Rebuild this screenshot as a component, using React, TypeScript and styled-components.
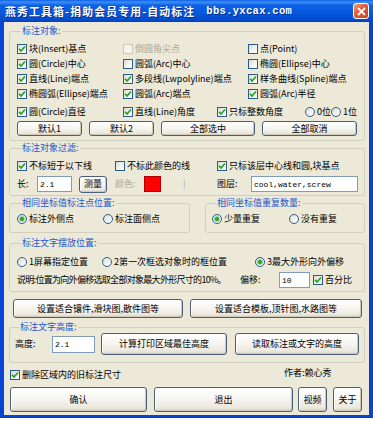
import React from 'react';
import styled, { createGlobalStyle } from 'styled-components';

const GlobalStyle = createGlobalStyle`
  html, body { margin: 0; padding: 0; background: #fff; }
  body {
    font-family: "Noto Sans CJK SC", "Noto Sans", sans-serif;
    font-size: 9px;
    line-height: 12px;
    color: #000;
  }
  * { box-sizing: border-box; }
`;

const Window = styled.div`
  width: 373px;
  display: flex;
  flex-direction: column;
`;

const TitleBar = styled.div`
  height: 22px;
  display: flex;
  align-items: center;
  padding: 0 4px 0 5px;
  background: linear-gradient(#0b5fe8 0%, #3e8ef6 9%, #0d60e6 25%, #0557dc 60%, #034bcc 90%, #0340b4 100%);
  color: #fff;
  font-weight: bold;
  font-size: 10.8px;
  text-shadow: 1px 1px 0 #0a2a8a;
  white-space: nowrap;
`;

const TitleText = styled.span`
  letter-spacing: 1.2px;
`;

const TitleUrl = styled.span`
  font-family: "Liberation Mono", monospace;
  font-size: 10.5px;
  letter-spacing: 0.3px;
  margin-left: 11px;
`;

const CloseBtn = styled.div`
  margin-left: auto;
  width: 16px;
  height: 16px;
  border: 1px solid #fff;
  border-radius: 3px;
  background: linear-gradient(135deg, #f0a08a 0%, #e0613c 40%, #c9401c 100%);
  display: flex;
  align-items: center;
  justify-content: center;
`;

const Body = styled.div`
  background: #ece9d8;
  border: solid #0843d4;
  border-width: 0 4px 3px 4px;
  padding: 3px 4px 3px 5px;
  display: flex;
  flex-direction: column;
`;

const Group = styled.fieldset<{ $pl?: number; $pt?: number; $pb?: number; $mt?: number }>`
  margin: ${p => p.$mt ?? 0}px 0 0 0;
  padding: ${p => p.$pt ?? 4}px 4px ${p => p.$pb ?? 4}px ${p => p.$pl ?? 7}px;
  border: 1px solid #d0d0bf;
  border-radius: 3px;
  min-width: 0;
`;

const Legend = styled.legend`
  margin-left: 4px;
  padding: 0 1px;
  color: #2456d0;
  line-height: 12px;
`;

const Row = styled.div<{ $cols: string; $h: number; $mt?: number }>`
  display: grid;
  grid-template-columns: ${p => p.$cols};
  height: ${p => p.$h}px;
  margin-top: ${p => p.$mt ?? 0}px;
  align-items: center;
  white-space: nowrap;
`;

const ButtonRow = styled.div<{ $gap: number; $mt: number; $pl?: number }>`
  display: flex;
  gap: ${p => p.$gap}px;
  margin-top: ${p => p.$mt}px;
  padding-left: ${p => p.$pl ?? 0}px;
`;

const SplitRow = styled.div`
  display: grid;
  grid-template-columns: 181px 160px;
  gap: 15px;
  margin-top: 1px;
`;

const Btn = styled.button<{ $w: number; $h: number }>`
  width: ${p => p.$w}px;
  height: ${p => p.$h}px;
  padding: 0;
  font: inherit;
  color: #000;
  border: 1px solid #4d5e7a;
  border-radius: 3px;
  background: linear-gradient(#ffffff 0%, #f7f6f2 45%, #ebe8de 85%, #d8d2c2 100%);
  box-shadow: inset -1px -1px 0 #cfc9ba, inset 1px 1px 0 #fff;
  white-space: nowrap;
`;

const TextInput = styled.input<{ $w: number; $h: number }>`
  width: ${p => p.$w}px;
  height: ${p => p.$h}px;
  border: 1px solid #7f9db9;
  background: #fff;
  padding: 0 2px;
  font-family: "Liberation Mono", monospace;
  font-size: 8px;
  color: #000;
  outline: none;
`;

const CheckLabel = styled.span<{ $disabled?: boolean }>`
  display: inline-flex;
  align-items: center;
  gap: 2px;
  white-space: nowrap;
  color: ${p => (p.$disabled ? '#aca899' : '#000')};
`;

const Box = styled.span<{ $disabled?: boolean }>`
  width: 10px;
  height: 10px;
  flex: none;
  border: 1px solid ${p => (p.$disabled ? '#cdcabd' : '#2a5d8c')};
  background: ${p => (p.$disabled ? '#f4f3ee' : 'linear-gradient(135deg, #dcdcd5 0%, #f4f4f0 60%, #fff 100%)')};
  display: flex;
  align-items: center;
  justify-content: center;
`;

const Circle = styled(Box)`
  border-radius: 50%;
`;

const Dot = styled.span`
  width: 4px;
  height: 4px;
  border-radius: 50%;
  background: #2aa22a;
  box-shadow: 0 0 0 1px #9ad49a;
`;

const Gray = styled.span`
  color: #aca899;
`;

const Note = styled.span`
  letter-spacing: -0.7px;
`;

const Swatch = styled.span`
  width: 17px;
  height: 16px;
  background: #ff0000;
  border: 1px solid #b00000;
`;

const Author = styled.span`
  margin-top: -3px;
`;

const BottomRow = styled.div`
  display: grid;
  grid-template-columns: 274px auto;
  align-items: center;
  height: 13px;
  margin-top: 5px;
  padding-left: 1px;
  white-space: nowrap;
`;

function Check({ label, checked, disabled }: { label: string; checked?: boolean; disabled?: boolean }) {
  return (
    <CheckLabel $disabled={disabled}>
      <Box $disabled={disabled}>
        {checked && (
          <svg width="8" height="8" viewBox="0 0 8 8">
            <path d="M1 3.8 L3 6 L7 1.5" fill="none" stroke="#21a121" strokeWidth="1.7" />
          </svg>
        )}
      </Box>
      {label}
    </CheckLabel>
  );
}

function Radio({ label, checked }: { label: string; checked?: boolean }) {
  return (
    <CheckLabel>
      <Circle>{checked && <Dot />}</Circle>
      {label}
    </CheckLabel>
  );
}

export default function App() {
  return (
    <>
      <GlobalStyle />
      <Window>
        <TitleBar>
          <TitleText>燕秀工具箱-捐助会员专用-自动标注</TitleText>
          <TitleUrl>bbs.yxcax.com</TitleUrl>
          <CloseBtn>
            <svg width="9" height="9" viewBox="0 0 9 9">
              <path d="M1 1 L8 8 M8 1 L1 8" stroke="#fff" strokeWidth="1.8" />
            </svg>
          </CloseBtn>
        </TitleBar>
        <Body>
          <Group $pt={4} $pb={4}>
            <Legend>标注对象:</Legend>
            <Row $cols="106px 125px 1fr" $h={15}>
              <Check label="块(Insert)基点" checked />
              <Check label="倒圆角尖点" disabled />
              <Check label="点(Point)" />
            </Row>
            <Row $cols="106px 125px 1fr" $h={15}>
              <Check label="圆(Circle)中心" checked />
              <Check label="圆弧(Arc)中心" />
              <Check label="椭圆(Ellipse)中心" />
            </Row>
            <Row $cols="106px 125px 1fr" $h={15}>
              <Check label="直线(Line)端点" checked />
              <Check label="多段线(Lwpolyline)端点" checked />
              <Check label="样条曲线(Spline)端点" checked />
            </Row>
            <Row $cols="106px 125px 1fr" $h={15}>
              <Check label="椭圆弧(Ellipse)端点" checked />
              <Check label="圆弧(Arc)端点" checked />
              <Check label="圆弧(Arc)半径" checked />
            </Row>
            <Row $cols="106px 94px 88px 26px auto" $h={15} $mt={3}>
              <Check label="圆(Circle)直径" checked />
              <Check label="直线(Line)角度" checked />
              <Check label="只标整数角度" checked />
              <Radio label="0位" />
              <Radio label="1位" />
            </Row>
            <ButtonRow $gap={7} $mt={2}>
              <Btn $w={65} $h={15}>默认1</Btn>
              <Btn $w={65} $h={15}>默认2</Btn>
              <Btn $w={94} $h={15}>全部选中</Btn>
              <Btn $w={95} $h={15}>全部取消</Btn>
            </ButtonRow>
          </Group>

          <Group $mt={1} $pt={4} $pb={2}>
            <Legend>标注对象过滤:</Legend>
            <Row $cols="98px 102px 1fr" $h={16}>
              <Check label="不标短于以下线" checked />
              <Check label="不标此颜色的线" />
              <Check label="只标该层中心线和圆,块基点" checked />
            </Row>
            <Row $cols="20px 42px 36px 29px 39px 34px 34px 1fr" $h={18} $mt={1}>
              <span>长:</span>
              <TextInput $w={35} $h={16} value="2.1" readOnly />
              <Btn $w={28} $h={17}>测量</Btn>
              <Gray>颜色:</Gray>
              <Swatch />
              <Gray>|</Gray>
              <span>图层:</span>
              <TextInput $w={107} $h={16} value="cool,water,screw" readOnly />
            </Row>
          </Group>

          <SplitRow>
            <Group $pt={3} $pb={6}>
              <Legend>相同坐标值标注点位置:</Legend>
              <Row $cols="86px auto" $h={14}>
                <Radio label="标注外侧点" checked />
                <Radio label="标注面侧点" />
              </Row>
            </Group>
            <Group $pt={3} $pb={6} $pl={6}>
              <Legend>相同坐标值重复数量:</Legend>
              <Row $cols="77px auto" $h={14}>
                <Radio label="少量重复" checked />
                <Radio label="没有重复" />
              </Row>
            </Group>
          </SplitRow>

          <Group $mt={4} $pt={5} $pb={2}>
            <Legend>标注文字摆放位置:</Legend>
            <Row $cols="85px 153px auto" $h={16}>
              <Radio label="1屏幕指定位置" />
              <Radio label="2第一次框选对象时的框位置" />
              <Radio label="3最大外形向外偏移" checked />
            </Row>
            <Row $cols="223px 39px 34px auto" $h={18} $mt={1}>
              <Note>说明:位置为向外偏移选取全部对象最大外形尺寸的10%。</Note>
              <span>偏移:</span>
              <TextInput $w={31} $h={16} value="10" readOnly />
              <Check label="百分比" checked />
            </Row>
          </Group>

          <ButtonRow $gap={7} $mt={7} $pl={4}>
            <Btn $w={170} $h={19}>设置适合镶件,滑块图,散件图等</Btn>
            <Btn $w={172} $h={19}>设置适合模板,顶针图,水路图等</Btn>
          </ButtonRow>

          <Group $mt={3} $pt={0} $pb={7} $pl={5}>
            <Legend>标注文字高度:</Legend>
            <Row $cols="37px 49px 134px auto" $h={22}>
              <span>高度:</span>
              <TextInput $w={43} $h={17} value="2.1" readOnly />
              <Btn $w={126} $h={22}>计算打印区域最佳高度</Btn>
              <Btn $w={124} $h={22}>读取标注或文字的高度</Btn>
            </Row>
          </Group>

          <BottomRow>
            <Check label="删除区域内的旧标注尺寸" checked />
            <Author>作者:赖心秀</Author>
          </BottomRow>

          <ButtonRow $gap={7} $mt={6} $pl={1}>
            <Btn $w={137} $h={25}>确认</Btn>
            <Btn $w={139} $h={25}>退出</Btn>
            <Btn $w={29} $h={25} style={{ marginLeft: -2 }}>视频</Btn>
            <Btn $w={29} $h={25} style={{ marginLeft: -1 }}>关于</Btn>
          </ButtonRow>
        </Body>
      </Window>
    </>
  );
}
